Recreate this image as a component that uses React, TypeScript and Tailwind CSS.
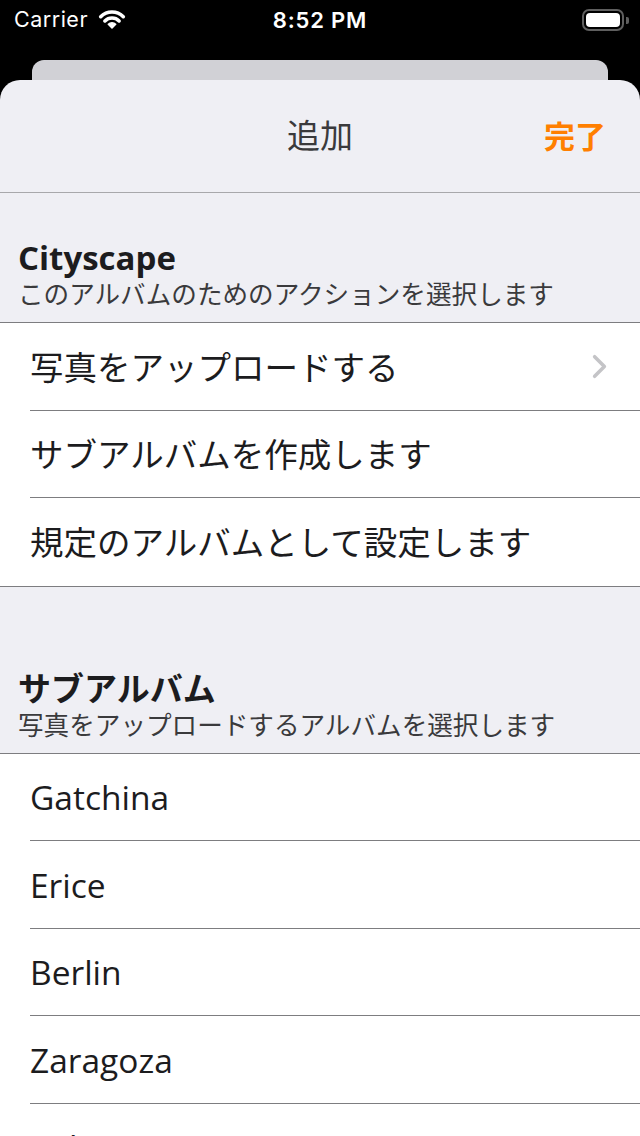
import { ChevronRight } from "lucide-react";

const font = "font-['Open_Sans','Noto_Sans_CJK_JP',sans-serif]";

function StatusBar() {
  return (
    <div className="relative flex h-[40px] shrink-0 items-center bg-black pl-[14px] pr-[11px] font-['Inter',sans-serif] text-white">
      <div className="flex items-center gap-[10px]">
        <span className="text-[21.5px] leading-none tracking-[0.5px]">Carrier</span>
        <svg width="28" height="20" viewBox="0 0 28 20" className="mt-[-2px]">
          <path d="M2.7 7.7 A16 16 0 0 1 25.3 7.7" fill="none" stroke="white" strokeWidth="3.6" strokeLinecap="round" />
          <path d="M6.9 11.9 A10 10 0 0 1 21.1 11.9" fill="none" stroke="white" strokeWidth="3.6" strokeLinecap="round" />
          <path d="M14 19 L10.3 15.3 A5.2 5.2 0 0 1 17.7 15.3 Z" fill="white" stroke="white" strokeWidth="1.5" strokeLinejoin="round" />
        </svg>
      </div>
      <span className="absolute left-1/2 -translate-x-1/2 text-[22px] font-semibold leading-none tracking-[0.8px]">8:52 PM</span>
      <div className="ml-auto flex items-center gap-[2px]">
        <div className="flex h-[22px] w-[42px] items-center rounded-[7px] border-2 border-[#5f5f5f] p-[2px]">
          <div className="h-full w-full rounded-[4px] bg-white" />
        </div>
        <div className="h-[7px] w-[3px] rounded-r-[2px] bg-[#5f5f5f]" />
      </div>
    </div>
  );
}

function Row({ label, chevron, last }: { label: string; chevron?: boolean; last?: boolean }) {
  return (
    <div className="flex h-[87.5px] shrink-0 bg-white pl-[30px]">
      <div
        className={
          "flex flex-1 items-center border-b pr-[21px] " +
          (last ? "border-transparent" : "border-[#7d7d80]")
        }
      >
        <span className="flex-1 pt-[2px] text-[33.5px] leading-none text-[#1c1c1e]">{label}</span>
        {chevron && <ChevronRight size={39} strokeWidth={2.2} className="text-[#c4c4c7]" />}
      </div>
    </div>
  );
}

function SectionHeader({ title, subtitle, h }: { title: string; subtitle: string; h: string }) {
  return (
    <div className={"flex shrink-0 flex-col justify-end px-[18px] pb-[10px] " + h}>
      <span className="text-[33px] font-bold leading-[40px] text-[#1c1c1e]">{title}</span>
      <span className="text-[25.6px] leading-[34px] text-[#3a3a3c]">{subtitle}</span>
    </div>
  );
}

export default function App() {
  return (
    <div className={"flex h-[1136px] w-[640px] flex-col overflow-hidden bg-black " + font}>
      <StatusBar />
      <div className="mx-[32px] mt-[20px] h-[20px] shrink-0 rounded-t-[12px] bg-[#d1d1d6]" />
      <div className="flex shrink-0 grow flex-col rounded-t-[20px] bg-[#efeff4]">
        <div className="relative flex h-[113px] shrink-0 items-center justify-center border-b border-[#a8a8ab]">
          <span className="text-[33px] text-[#3a3a3c]">追加</span>
          <span className="absolute right-[34px] text-[31px] font-bold text-[#ff7f00]">完了</span>
        </div>
        <SectionHeader title="Cityscape" subtitle="このアルバムのためのアクションを選択します" h="h-[129px]" />
        <div className="border-y border-[#7d7d80]">
          <Row label="写真をアップロードする" chevron />
          <Row label="サブアルバムを作成します" />
          <Row label="規定のアルバムとして設定します" last />
        </div>
        <SectionHeader title="サブアルバム" subtitle="写真をアップロードするアルバムを選択します" h="h-[166px]" />
        <div className="border-t border-[#7d7d80]">
          <Row label="Gatchina" />
          <Row label="Erice" />
          <Row label="Berlin" />
          <Row label="Zaragoza" />
          <Row label="Tula" />
        </div>
      </div>
    </div>
  );
}
